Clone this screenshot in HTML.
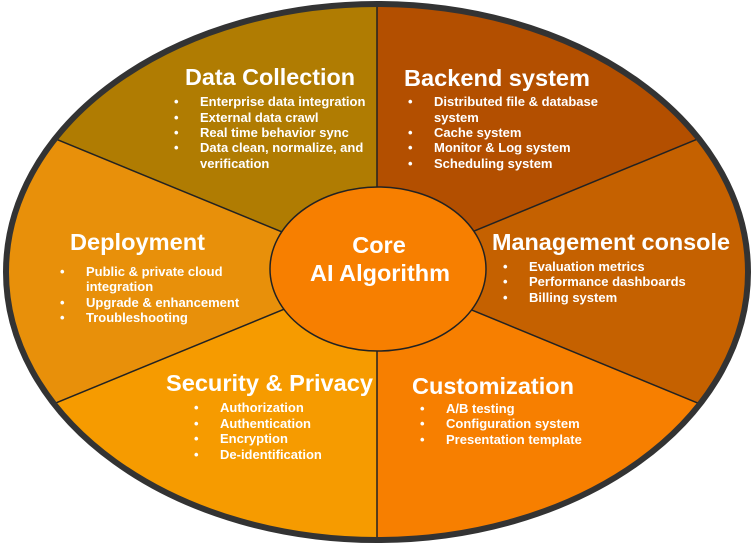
<!DOCTYPE html>
<html><head><meta charset="utf-8"><style>
html,body{margin:0;padding:0;background:#fff;width:753px;height:545px;overflow:hidden}
svg{display:block;position:absolute;left:0;top:0}
text{font-family:"Liberation Sans",Arial,sans-serif;font-weight:bold;fill:#fff}
.t{font-size:23px}
.b{font-size:13px}
.c{font-size:23.5px}
</style></head><body>
<svg width="753" height="545" viewBox="0 0 753 545">
<defs>
<clipPath id="e"><ellipse cx="377" cy="272" rx="371" ry="268"/></clipPath>
<filter id="s" x="0" y="0" width="1" height="1" filterUnits="userSpaceOnUse"><feDropShadow dx="1" dy="1" stdDeviation="0.6" flood-color="#000" flood-opacity="0.45"/></filter>
</defs>
<g clip-path="url(#e)">
<polygon points="377,271 -100,75 -100,-100 377,-100" fill="#b07c02"/>
<polygon points="377,271 377,-100 853,-100 853,75" fill="#b34f00"/>
<polygon points="377,271 853,75 853,467" fill="#c56100"/>
<polygon points="377,271 853,467 853,645 377,645" fill="#f77f00"/>
<polygon points="377,271 377,645 -100,645 -100,467" fill="#f69b00"/>
<polygon points="377,271 -100,467 -100,75" fill="#e8900a"/>
<g stroke="#222" stroke-width="1.5">
<line x1="377" y1="0" x2="377" y2="545"/>
<line x1="377" y1="271" x2="-100" y2="75"/>
<line x1="377" y1="271" x2="853" y2="75"/>
<line x1="377" y1="271" x2="-100" y2="467"/>
<line x1="377" y1="271" x2="853" y2="467"/>
</g>
</g>
<ellipse cx="377" cy="272" rx="371" ry="268" fill="none" stroke="#333" stroke-width="6"/>
<ellipse cx="378" cy="269" rx="108" ry="82" fill="#f77f00" stroke="#222" stroke-width="1.5"/>
<g>
<text class="c" x="379" y="253" text-anchor="middle">Core</text>
<text class="c" x="380" y="281" text-anchor="middle" textLength="140" lengthAdjust="spacingAndGlyphs">AI Algorithm</text>

<text class="t" x="185" y="85" textLength="170" lengthAdjust="spacingAndGlyphs">Data Collection</text>
<text class="b" x="174" y="106">•</text><text class="b" x="200" y="106">Enterprise data integration</text>
<text class="b" x="174" y="122">•</text><text class="b" x="200" y="122">External data crawl</text>
<text class="b" x="174" y="137">•</text><text class="b" x="200" y="137">Real time behavior sync</text>
<text class="b" x="174" y="152">•</text><text class="b" x="200" y="152">Data clean, normalize, and</text>
<text class="b" x="200" y="168">verification</text>

<text class="t" x="404" y="86" textLength="186" lengthAdjust="spacingAndGlyphs">Backend system</text>
<text class="b" x="408" y="106">•</text><text class="b" x="434" y="106">Distributed file &amp; database</text>
<text class="b" x="434" y="122">system</text>
<text class="b" x="408" y="137">•</text><text class="b" x="434" y="137">Cache system</text>
<text class="b" x="408" y="152">•</text><text class="b" x="434" y="152">Monitor &amp; Log system</text>
<text class="b" x="408" y="168">•</text><text class="b" x="434" y="168">Scheduling system</text>

<text class="t" x="70" y="250" textLength="135" lengthAdjust="spacingAndGlyphs">Deployment</text>
<text class="b" x="60" y="276">•</text><text class="b" x="86" y="276">Public &amp; private cloud</text>
<text class="b" x="86" y="291">integration</text>
<text class="b" x="60" y="307">•</text><text class="b" x="86" y="307">Upgrade &amp; enhancement</text>
<text class="b" x="60" y="322">•</text><text class="b" x="86" y="322">Troubleshooting</text>

<text class="t" x="492" y="250" textLength="238" lengthAdjust="spacingAndGlyphs">Management console</text>
<text class="b" x="503" y="271">•</text><text class="b" x="529" y="271">Evaluation metrics</text>
<text class="b" x="503" y="286">•</text><text class="b" x="529" y="286">Performance dashboards</text>
<text class="b" x="503" y="302">•</text><text class="b" x="529" y="302">Billing system</text>

<text class="t" x="166" y="391" textLength="207" lengthAdjust="spacingAndGlyphs">Security &amp; Privacy</text>
<text class="b" x="194" y="412">•</text><text class="b" x="220" y="412">Authorization</text>
<text class="b" x="194" y="428">•</text><text class="b" x="220" y="428">Authentication</text>
<text class="b" x="194" y="443">•</text><text class="b" x="220" y="443">Encryption</text>
<text class="b" x="194" y="459">•</text><text class="b" x="220" y="459">De-identification</text>

<text class="t" x="412" y="394" textLength="162" lengthAdjust="spacingAndGlyphs">Customization</text>
<text class="b" x="420" y="413">•</text><text class="b" x="446" y="413">A/B testing</text>
<text class="b" x="420" y="428">•</text><text class="b" x="446" y="428">Configuration system</text>
<text class="b" x="420" y="444">•</text><text class="b" x="446" y="444">Presentation template</text>
</g>
</svg>
</body></html>
